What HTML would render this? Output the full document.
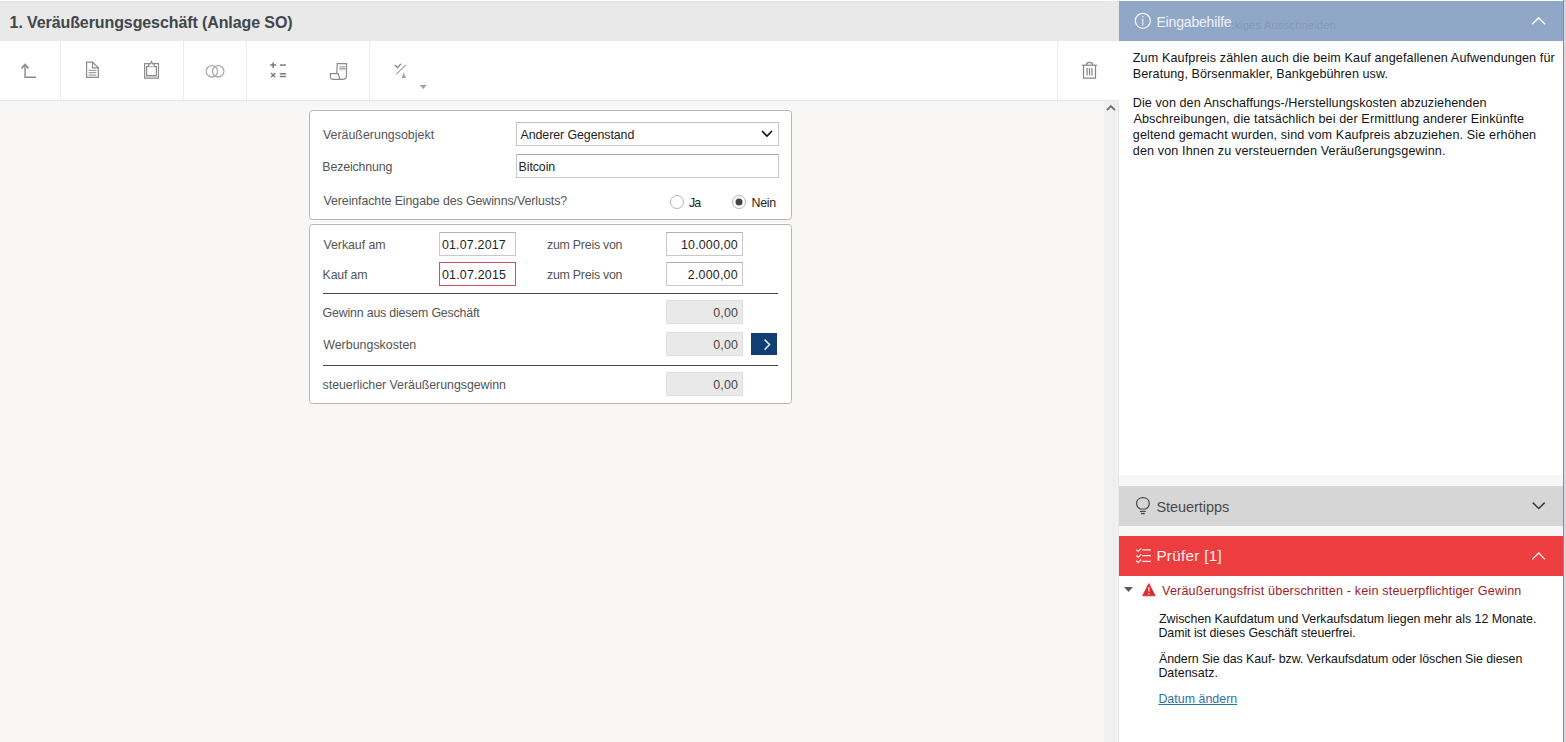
<!DOCTYPE html>
<html><head><meta charset="utf-8"><style>
html,body{margin:0;padding:0;}
body{width:1566px;height:742px;overflow:hidden;position:relative;background:#f8f7f6;font-family:"Liberation Sans",sans-serif;}
.a{position:absolute;box-sizing:border-box;}
.t{position:absolute;white-space:pre;}
svg{position:absolute;overflow:visible;}
</style></head><body>
<!-- top white line -->
<div class="a" style="left:0;top:0;width:1566px;height:1px;background:#fff"></div>
<!-- title bar -->
<div class="a" style="left:0;top:1px;width:1104px;height:40px;background:#e9e9e9;border-top:1px solid #e2e2e2"></div>
<!-- toolbar -->
<div class="a" style="left:0;top:41px;width:1104px;height:60px;background:#fff;border-bottom:1px solid #e4e4e4"></div>
<div class="a" style="left:60px;top:41px;width:1px;height:59px;background:#ececec"></div>
<div class="a" style="left:183px;top:41px;width:1px;height:59px;background:#ececec"></div>
<div class="a" style="left:246px;top:41px;width:1px;height:59px;background:#ececec"></div>
<div class="a" style="left:369px;top:41px;width:1px;height:59px;background:#ececec"></div>
<div class="a" style="left:1057px;top:41px;width:1px;height:59px;background:#ececec"></div>

<!-- toolbar icons -->
<svg style="left:0;top:0" width="1104" height="101" fill="none">
 <g stroke="#8c8c8c" stroke-width="1.4">
  <path d="M25 65 V77.3 H36"/>
  <path d="M21.6 68.4 L25 64.6 L28.4 68.4" stroke-width="1.7"/>
 </g>
 <g stroke="#8c8c8c" stroke-width="1.2">
  <path d="M86.6 62.1 H92.6 L98.3 67.8 V77.3 H86.6 Z" fill="#fff"/>
  <path d="M92.6 62.1 V67.8 H98.3"/>
  <path d="M88.5 70.4 H96.3 M88.5 72.7 H96.3 M88.5 75.1 H96.3" stroke="#a0a0a0"/>
 </g>
 <g stroke="#8c8c8c" stroke-width="1.2">
  <rect x="144.6" y="63.6" width="13.9" height="14.6" fill="#fff"/>
  <rect x="146.6" y="66.6" width="9.8" height="8.9"/>
  <rect x="145.2" y="76" width="12.7" height="1.6" stroke="none" fill="#c4c4c4"/>
  <path d="M148.6 66.5 V63.9 H150.4 L151.5 61.7 L152.6 63.9 H154.4 V66.5" fill="#fff"/>
 </g>
 <g stroke="#acacac" stroke-width="1.3">
  <circle cx="211.9" cy="71.3" r="5.7"/>
  <circle cx="218.2" cy="71.3" r="5.7"/>
 </g>
 <g stroke="#7a7a7a" stroke-width="1.5">
  <path d="M270.2 65.1 H276.1 M273.15 62.2 V68"/>
  <path d="M279.8 65.1 H285.9"/>
  <path d="M271 73 L275.3 77.3 M275.3 73 L271 77.3" stroke-width="1.3"/>
  <path d="M279.8 73.8 H285.9 M279.8 76.4 H285.9"/>
 </g>
 <g stroke="#8c8c8c" stroke-width="1.2">
  <path d="M336.8 73.6 L337.2 63.6 H346.5 V75.5 C346.5 78.3 345.2 79.4 342.2 79.4 H333 C331.3 79.4 330.6 78.6 330.4 77 L330.2 73.6 H338.2 L340 79.3" fill="#fff"/>
  <path d="M339.3 66.8 H345.6 M339.3 68.4 H345.6" stroke="#a8a8a8" stroke-width="1.1"/>
  <path d="M339.3 69.8 H345.6" stroke="#b8b8b8" stroke-width="0.9"/>
 </g>
 <g stroke="#7a7a7a" stroke-width="1.3">
  <path d="M394.8 64.9 L397.5 67.6 L400.9 63.9"/>
  <path d="M405.6 65.2 L396.3 74.2" stroke="#9a9a9a" stroke-width="1.1"/>
  <path d="M403.8 72.2 L406.1 77.7 H401.5 Z" fill="#8e8e8e" stroke="none"/><path d="M401.5 74.3 H406.1 M401.5 76 H406.1" stroke="#fff" stroke-width="0.5"/>
 </g>
 <path d="M419.6 85.1 H426.8 L423.2 89 Z" fill="#a4a4a4"/>
 <g stroke="#858585" stroke-width="1.2">
  <path d="M1082 65.2 H1097"/>
  <path d="M1083.5 65.2 V78.2 H1095.5 V65.2"/>
  <path d="M1086.4 65 C1086.4 61.5 1092.6 61.5 1092.6 65"/>
  <path d="M1087.1 68 V75.4 M1089.5 68 V75.4 M1091.9 68 V75.4"/>
 </g>
</svg>
<div class="a" style="left:1118px;top:0;width:1px;height:101px;background:#fafafa"></div>

<!-- scrollbar -->
<div class="a" style="left:1104px;top:1px;width:15px;height:40px;background:#e9e9e9"></div>
<div class="a" style="left:1104px;top:41px;width:15px;height:60px;background:#fff"></div>
<div class="a" style="left:1104px;top:101px;width:15px;height:641px;background:#f1f1f1;border-right:1px solid #e6e6e6"></div>
<div class="a" style="left:1113px;top:101px;width:2px;height:641px;background:#ededed"></div>
<div class="a" style="left:1104px;top:100px;width:15px;height:1px;background:#e6e6e6"></div>
<svg style="left:1104px;top:101px" width="15" height="15"><path d="M2.8 9.1 L6.9 5 L11 9.1" fill="none" stroke="#707070" stroke-width="1.8"/></svg>

<!-- form box 1 -->
<div class="a" style="left:309px;top:110px;width:483px;height:110px;background:#fff;border:1px solid #b6b6b6;border-radius:3.5px;box-shadow:0 -1px 0 rgba(255,255,255,0.9)"></div>
<div class="a" style="left:516px;top:122px;width:263px;height:24px;background:#fff;border:1px solid #c9c9c9;border-top-color:#bdbdbd"></div>
<svg style="left:760px;top:128px" width="14" height="12"><path d="M2 3 L7 8 L12 3" fill="none" stroke="#111" stroke-width="1.6"/></svg>
<div class="a" style="left:516px;top:154px;width:263px;height:24px;background:#fff;border:1px solid #c9c9c9;border-top-color:#a9a9a9"></div>
<svg style="left:669px;top:194px" width="16" height="16"><circle cx="8" cy="8" r="6.5" fill="#fff" stroke="#b4b4b4" stroke-width="1"/></svg>
<svg style="left:731px;top:194px" width="16" height="16"><circle cx="8" cy="8" r="6.5" fill="#fff" stroke="#b4b4b4" stroke-width="1"/><circle cx="8" cy="8" r="3.5" fill="#444"/></svg>

<!-- form box 2 -->
<div class="a" style="left:309px;top:224px;width:483px;height:180px;background:#fff;border:1px solid #b6b6b6;border-radius:3.5px;box-shadow:0 -1px 0 rgba(255,255,255,0.9)"></div>
<div class="a" style="left:439px;top:232px;width:77px;height:24px;background:#fff;border:1px solid #c9c9c9;border-top-color:#b0b0b0"></div>
<div class="a" style="left:666px;top:232px;width:77px;height:24px;background:#fff;border:1px solid #c9c9c9;border-top-color:#b0b0b0"></div>
<div class="a" style="left:439px;top:262px;width:77px;height:24px;background:#fff;border:1px solid #c8555f"></div>
<div class="a" style="left:666px;top:262px;width:77px;height:24px;background:#fff;border:1px solid #c9c9c9;border-top-color:#b0b0b0"></div>
<div class="a" style="left:323px;top:293px;width:455px;height:1px;background:#474747"></div>
<div class="a" style="left:666px;top:300px;width:77px;height:24px;background:#e9e9ea;border:1px solid #e0e0e0"></div>
<div class="a" style="left:666px;top:332px;width:77px;height:24px;background:#e9e9ea;border:1px solid #e0e0e0"></div>
<div class="a" style="left:751px;top:333px;width:26px;height:22px;background:#0e3f70"></div>
<svg style="left:751px;top:333px" width="26" height="22"><path d="M13.6 6.6 L18.6 11.6 L13.6 16.6" fill="none" stroke="#d2e8fb" stroke-width="1.5"/></svg>
<div class="a" style="left:323px;top:365px;width:455px;height:1px;background:#474747"></div>
<div class="a" style="left:666px;top:372px;width:77px;height:24px;background:#e9e9ea;border:1px solid #e0e0e0"></div>

<!-- right panel -->
<div class="a" style="left:1119px;top:0;width:447px;height:742px;background:#fff"></div>
<div class="a" style="left:1119px;top:1px;width:444px;height:40px;background:#91a7c7"></div>
<div class="a" style="left:1119px;top:475px;width:444px;height:11px;background:#f7f7f7"></div>
<div class="a" style="left:1119px;top:486px;width:444px;height:40px;background:#d6d6d6"></div>
<div class="a" style="left:1119px;top:526px;width:444px;height:10px;background:#f7f7f8"></div>
<div class="a" style="left:1119px;top:536px;width:444px;height:40px;background:#ec3d41"></div>
<div class="a" style="left:1563px;top:0;width:1px;height:742px;background:#6393d6"></div>
<div class="a" style="left:1564px;top:0;width:2px;height:742px;background:#d8d8dc"></div>


<!-- ghost tooltip text -->
<div class="a" style="left:1232px;top:14px;width:104px;height:20px;overflow:hidden"><div class="t" style="right:0;top:5.5px;font-size:11.5px;line-height:11.5px;color:rgba(70,90,125,0.2)">Rechteckiges Ausschneiden</div></div>
<svg style="left:1119px;top:0" width="447" height="742" fill="none">
 <g transform="translate(-1119,0)">
  <circle cx="1142.8" cy="20.8" r="7.5" stroke="#f2f6ff" stroke-width="1.2"/>
  <path d="M1142.8 16 V17.5 M1142.8 18.8 V25.6" stroke="#f2f6ff" stroke-width="1.1"/>
  <path d="M1532.1 24.2 L1538.6 17.9 L1545.1 24.2" stroke="#f4f8ff" stroke-width="1.5"/>
  <path d="M1140.2 509 C1137.6 507.6 1136.6 505.4 1136.6 503.4 C1136.6 499.9 1139.4 497.7 1142.9 497.7 C1146.4 497.7 1149.2 499.9 1149.2 503.4 C1149.2 505.4 1148.2 507.6 1145.6 509 Z" stroke="#474747" stroke-width="1.2"/>
  <path d="M1140 511.4 H1145.7" stroke="#474747" stroke-width="1.3"/>
  <path d="M1141 513.6 H1144.7" stroke="#474747" stroke-width="1.3"/>
  <path d="M1532.8 502.6 L1538.7 508.5 L1544.7 502.6" stroke="#3a3a3a" stroke-width="1.5"/>
  <g stroke="#ffe9ea" stroke-width="1.2">
   <path d="M1136.2 549.6 L1138.2 551.5 L1141.2 548.3 M1136.2 555.4 L1138.2 557.3 L1141.2 554.1 M1136.2 560.8 L1138.2 562.7 L1141.2 559.5"/>
   <path d="M1142.3 549.9 H1150.8 M1142.3 555.6 H1150.8 M1142.3 561.4 H1150.8" stroke-width="1.4"/>
  </g>
  <path d="M1532.3 559.4 L1538.7 553 L1544.9 559.4" stroke="#ffeeee" stroke-width="1.3"/>
  <path d="M1124 587 H1133 L1128.5 592 Z" fill="#5a5a5a"/>
  <path d="M1148.9 583.6 L1155.2 595.8 H1142.6 Z" fill="#dc2a33" stroke="#dc2a33" stroke-width="0.8" stroke-linejoin="round"/>
  <path d="M1148.9 587.2 V591.6 M1148.9 593 V594.3" stroke="#ffe8e8" stroke-width="1.3"/>
 </g>
</svg>

<div class="t" id="t0" style="left:9.60px;top:14.70px;font-size:16px;line-height:16px;color:#41464b;font-weight:700;letter-spacing:-0.097px;">1. Veräußerungsgeschäft (Anlage SO)</div>
<div class="t" id="t1" style="left:322.90px;top:129.46px;font-size:12.4px;line-height:12.4px;color:#555555;font-weight:400;letter-spacing:0.018px;">Veräußerungsobjekt</div>
<div class="t" id="t2" style="left:520.50px;top:129.46px;font-size:12.4px;line-height:12.4px;color:#1e1e1e;font-weight:400;letter-spacing:-0.071px;">Anderer Gegenstand</div>
<div class="t" id="t3" style="left:322.30px;top:161.46px;font-size:12.4px;line-height:12.4px;color:#555555;font-weight:400;letter-spacing:-0.150px;">Bezeichnung</div>
<div class="t" id="t4" style="left:518.60px;top:161.46px;font-size:12.4px;line-height:12.4px;color:#1e1e1e;font-weight:400;letter-spacing:-0.100px;">Bitcoin</div>
<div class="t" id="t5" style="left:323.50px;top:195.46px;font-size:12.4px;line-height:12.4px;color:#555555;font-weight:400;letter-spacing:-0.088px;">Vereinfachte Eingabe des Gewinns/Verlusts?</div>
<div class="t" id="t6" style="left:689.10px;top:197.46px;font-size:12.4px;line-height:12.4px;color:#1e1e1e;font-weight:400;letter-spacing:-1.000px;">Ja</div>
<div class="t" id="t7" style="left:751.60px;top:197.46px;font-size:12.4px;line-height:12.4px;color:#1e1e1e;font-weight:400;letter-spacing:-0.300px;">Nein</div>
<div class="t" id="t8" style="left:323.50px;top:239.46px;font-size:12.4px;line-height:12.4px;color:#555555;font-weight:400;letter-spacing:-0.067px;">Verkauf am</div>
<div class="t" id="t9" style="left:441.90px;top:239.46px;font-size:12.4px;line-height:12.4px;color:#1e1e1e;font-weight:400;letter-spacing:0.200px;">01.07.2017</div>
<div class="t" id="t10" style="left:547.00px;top:239.46px;font-size:12.4px;line-height:12.4px;color:#555555;font-weight:400;letter-spacing:-0.250px;">zum Preis von</div>
<div class="t" id="t11" style="right:828.21px;top:239.46px;font-size:12.4px;line-height:12.4px;color:#1e1e1e;font-weight:400;letter-spacing:0.187px;">10.000,00</div>
<div class="t" id="t12" style="left:322.60px;top:269.46px;font-size:12.4px;line-height:12.4px;color:#555555;font-weight:400;letter-spacing:-0.200px;">Kauf am</div>
<div class="t" id="t13" style="left:441.90px;top:269.46px;font-size:12.4px;line-height:12.4px;color:#1e1e1e;font-weight:400;letter-spacing:0.233px;">01.07.2015</div>
<div class="t" id="t14" style="left:547.00px;top:269.46px;font-size:12.4px;line-height:12.4px;color:#555555;font-weight:400;letter-spacing:-0.250px;">zum Preis von</div>
<div class="t" id="t15" style="right:828.19px;top:269.46px;font-size:12.4px;line-height:12.4px;color:#1e1e1e;font-weight:400;letter-spacing:0.214px;">2.000,00</div>
<div class="t" id="t16" style="left:322.60px;top:307.46px;font-size:12.4px;line-height:12.4px;color:#555555;font-weight:400;letter-spacing:-0.192px;">Gewinn aus diesem Geschäft</div>
<div class="t" id="t17" style="right:827.80px;top:307.46px;font-size:12.4px;line-height:12.4px;color:#444;font-weight:400;letter-spacing:0.200px;">0,00</div>
<div class="t" id="t18" style="left:323.20px;top:339.46px;font-size:12.4px;line-height:12.4px;color:#555555;font-weight:400;letter-spacing:0.023px;">Werbungskosten</div>
<div class="t" id="t19" style="right:827.80px;top:339.46px;font-size:12.4px;line-height:12.4px;color:#444;font-weight:400;letter-spacing:0.200px;">0,00</div>
<div class="t" id="t20" style="left:322.60px;top:379.46px;font-size:12.4px;line-height:12.4px;color:#555555;font-weight:400;letter-spacing:-0.040px;">steuerlicher Veräußerungsgewinn</div>
<div class="t" id="t21" style="right:827.80px;top:379.46px;font-size:12.4px;line-height:12.4px;color:#444;font-weight:400;letter-spacing:0.200px;">0,00</div>
<div class="t" id="t22" style="left:1156.40px;top:15.10px;font-size:14px;line-height:14px;color:#eef3fb;font-weight:400;letter-spacing:-0.164px;">Eingabehilfe</div>
<div class="t" id="t23" style="left:1132.80px;top:52.29px;font-size:12.6px;line-height:12.6px;color:#141414;font-weight:400;letter-spacing:0.110px;">Zum Kaufpreis zählen auch die beim Kauf angefallenen Aufwendungen für</div>
<div class="t" id="t24" style="left:1132.80px;top:68.29px;font-size:12.6px;line-height:12.6px;color:#141414;font-weight:400;letter-spacing:0.060px;">Beratung, Börsenmakler, Bankgebühren usw.</div>
<div class="t" id="t25" style="left:1132.80px;top:97.29px;font-size:12.6px;line-height:12.6px;color:#141414;font-weight:400;letter-spacing:0.068px;">Die von den Anschaffungs-/Herstellungskosten abzuziehenden</div>
<div class="t" id="t26" style="left:1133.40px;top:113.29px;font-size:12.6px;line-height:12.6px;color:#141414;font-weight:400;letter-spacing:0.116px;">Abschreibungen, die tatsächlich bei der Ermittlung anderer Einkünfte</div>
<div class="t" id="t27" style="left:1132.80px;top:129.29px;font-size:12.6px;line-height:12.6px;color:#141414;font-weight:400;letter-spacing:0.129px;">geltend gemacht wurden, sind vom Kaufpreis abzuziehen. Sie erhöhen</div>
<div class="t" id="t28" style="left:1132.80px;top:145.29px;font-size:12.6px;line-height:12.6px;color:#141414;font-weight:400;letter-spacing:0.122px;">den von Ihnen zu versteuernden Veräußerungsgewinn.</div>
<div class="t" id="t29" style="left:1156.40px;top:499.68px;font-size:14.5px;line-height:14.5px;color:#4a4a4a;font-weight:400;letter-spacing:-0.060px;">Steuertipps</div>
<div class="t" id="t30" style="left:1156.40px;top:548.20px;font-size:15.3px;line-height:15.3px;color:#fff0f0;font-weight:400;letter-spacing:0.267px;">Prüfer [1]</div>
<div class="t" id="t31" style="left:1162.00px;top:585.29px;font-size:12.6px;line-height:12.6px;color:#a01c26;font-weight:400;letter-spacing:0.174px;">Veräußerungsfrist überschritten - kein steuerpflichtiger Gewinn</div>
<div class="t" id="t32" style="left:1159.00px;top:613.46px;font-size:12.4px;line-height:12.4px;color:#141414;font-weight:400;letter-spacing:-0.024px;">Zwischen Kaufdatum und Verkaufsdatum liegen mehr als 12 Monate.</div>
<div class="t" id="t33" style="left:1158.40px;top:627.46px;font-size:12.4px;line-height:12.4px;color:#141414;font-weight:400;letter-spacing:-0.050px;">Damit ist dieses Geschäft steuerfrei.</div>
<div class="t" id="t34" style="left:1159.00px;top:653.46px;font-size:12.4px;line-height:12.4px;color:#141414;font-weight:400;letter-spacing:-0.073px;">Ändern Sie das Kauf- bzw. Verkaufsdatum oder löschen Sie diesen</div>
<div class="t" id="t35" style="left:1158.40px;top:667.46px;font-size:12.4px;line-height:12.4px;color:#141414;font-weight:400;letter-spacing:0.033px;">Datensatz.</div>
<div class="t" id="t36" style="left:1158.40px;top:693.46px;font-size:12.4px;line-height:12.4px;color:#2b72a8;font-weight:400;letter-spacing:0.027px;text-decoration:underline;">Datum ändern</div>
</body></html>
